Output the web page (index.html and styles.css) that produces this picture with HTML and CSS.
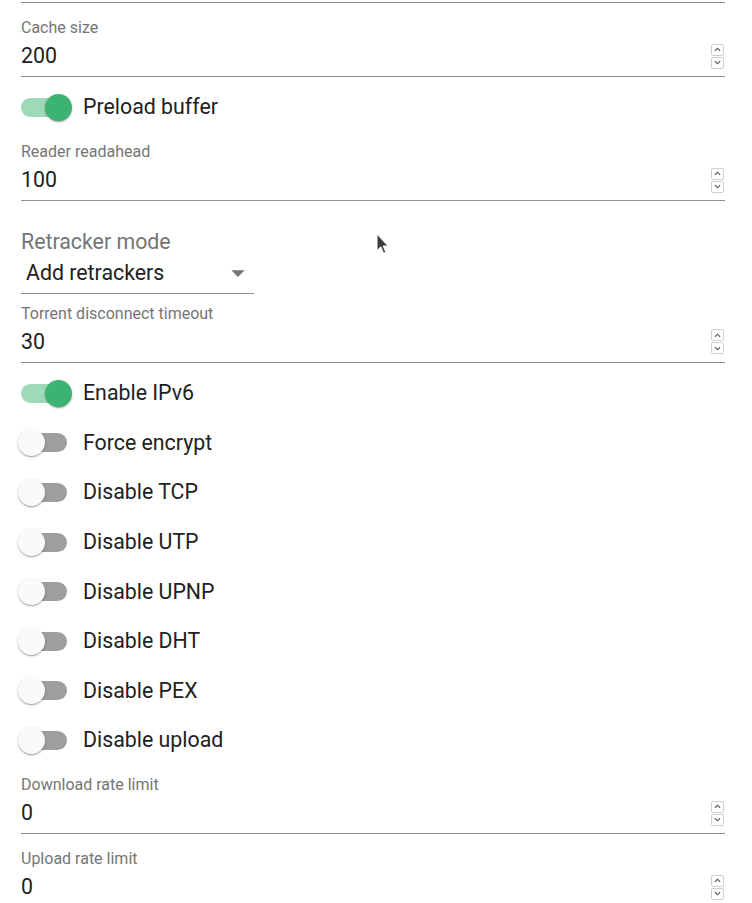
FILE: index.html
```html
<!DOCTYPE html>
<html lang="en">
<head>
<meta charset="utf-8">
<title>Settings</title>
<link rel="stylesheet" href="styles.css">
</head>
<body>
<div class="page">
  <div class="topline"></div>

  <div class="field gap-first">
    <div class="label">Cache size</div>
    <div class="input-row">
      <span class="value">200</span>
      <span class="spinner"><span class="spin-btn"><svg viewBox="0 0 8 5" class="chev"><path d="M1 4 L4 1 L7 4"/></svg></span><span class="spin-btn"><svg viewBox="0 0 8 5" class="chev"><path d="M1 1 L4 4 L7 1"/></svg></span></span>
    </div>
  </div>

  <div class="switch-row gap-sw-first">
    <span class="switch on"><span class="track"></span><span class="thumb"></span></span>
    <span class="sw-label">Preload buffer</span>
  </div>

  <div class="field gap-after-switch">
    <div class="label">Reader readahead</div>
    <div class="input-row">
      <span class="value">100</span>
      <span class="spinner"><span class="spin-btn"><svg viewBox="0 0 8 5" class="chev"><path d="M1 4 L4 1 L7 4"/></svg></span><span class="spin-btn"><svg viewBox="0 0 8 5" class="chev"><path d="M1 1 L4 4 L7 1"/></svg></span></span>
    </div>
  </div>

  <div class="select-field">
    <div class="select-label">Retracker mode</div>
    <div class="select-row">
      <span class="select-value">Add retrackers</span>
      <svg class="select-arrow" viewBox="0 0 24 24"><path d="M7 10l5 5 5-5z"/></svg>
    </div>
  </div>

  <div class="field gap-after-select">
    <div class="label">Torrent disconnect timeout</div>
    <div class="input-row">
      <span class="value">30</span>
      <span class="spinner"><span class="spin-btn"><svg viewBox="0 0 8 5" class="chev"><path d="M1 4 L4 1 L7 4"/></svg></span><span class="spin-btn"><svg viewBox="0 0 8 5" class="chev"><path d="M1 1 L4 4 L7 1"/></svg></span></span>
    </div>
  </div>

  <div class="switch-list">
    <div class="switch-row">
      <span class="switch on"><span class="track"></span><span class="thumb"></span></span>
      <span class="sw-label">Enable IPv6</span>
    </div>
    <div class="switch-row">
      <span class="switch"><span class="track"></span><span class="thumb"></span></span>
      <span class="sw-label">Force encrypt</span>
    </div>
    <div class="switch-row">
      <span class="switch"><span class="track"></span><span class="thumb"></span></span>
      <span class="sw-label">Disable TCP</span>
    </div>
    <div class="switch-row">
      <span class="switch"><span class="track"></span><span class="thumb"></span></span>
      <span class="sw-label">Disable UTP</span>
    </div>
    <div class="switch-row">
      <span class="switch"><span class="track"></span><span class="thumb"></span></span>
      <span class="sw-label">Disable UPNP</span>
    </div>
    <div class="switch-row">
      <span class="switch"><span class="track"></span><span class="thumb"></span></span>
      <span class="sw-label">Disable DHT</span>
    </div>
    <div class="switch-row">
      <span class="switch"><span class="track"></span><span class="thumb"></span></span>
      <span class="sw-label">Disable PEX</span>
    </div>
    <div class="switch-row">
      <span class="switch"><span class="track"></span><span class="thumb"></span></span>
      <span class="sw-label">Disable upload</span>
    </div>
  </div>

  <div class="field gap-after-list">
    <div class="label">Download rate limit</div>
    <div class="input-row">
      <span class="value">0</span>
      <span class="spinner"><span class="spin-btn"><svg viewBox="0 0 8 5" class="chev"><path d="M1 4 L4 1 L7 4"/></svg></span><span class="spin-btn"><svg viewBox="0 0 8 5" class="chev"><path d="M1 1 L4 4 L7 1"/></svg></span></span>
    </div>
  </div>

  <div class="field gap-field-field">
    <div class="label">Upload rate limit</div>
    <div class="input-row">
      <span class="value">0</span>
      <span class="spinner"><span class="spin-btn"><svg viewBox="0 0 8 5" class="chev"><path d="M1 4 L4 1 L7 4"/></svg></span><span class="spin-btn"><svg viewBox="0 0 8 5" class="chev"><path d="M1 1 L4 4 L7 1"/></svg></span></span>
    </div>
  </div>

  <svg class="cursor" viewBox="0 0 12 20" width="13" height="22"><path d="M1 1 L1 16 L4.5 12.5 L7 18.5 L9 17.6 L6.6 11.8 L11 11.8 Z"/></svg>
</div>
</body>
</html>
```

FILE: styles.css
```css
html, body {
  margin: 0;
  padding: 0;
  background: #ffffff;
  overflow: hidden;
}

.page {
  position: relative;
  padding: 0 27px 0 21px;
  font-family: Roboto, "Liberation Sans", Arial, sans-serif;
  color: #212121;
}

.topline {
  height: 2px;
  border-bottom: 1px solid #8f8f8f;
}

.field {
  display: flex;
  flex-direction: column;
}

.gap-first { margin-top: 15px; }
.gap-after-switch { margin-top: 10px; }
.gap-after-select { margin-top: 10px; }
.gap-after-list { margin-top: 10px; }
.gap-field-field { margin-top: 15px; }

.label {
  font-size: 16px;
  line-height: 19px;
  color: #757575;
}

.input-row {
  display: flex;
  align-items: center;
  margin-top: 6px;
  height: 26px;
  padding-bottom: 7px;
  border-bottom: 1px solid #8f8f8f;
}

.value {
  font-size: 21.33px;
  line-height: 26px;
  color: #212121;
}

.spinner {
  margin-left: auto;
  margin-right: 1px;
  display: flex;
  flex-direction: column;
  width: 13px;
  height: 25px;
}

.spin-btn {
  flex: 1;
  display: flex;
  align-items: center;
  justify-content: center;
  border: 1px solid #cfcfcf;
  border-radius: 2px;
  box-sizing: border-box;
}

.spin-btn + .spin-btn {
  margin-top: 1px;
}

.chev {
  width: 7px;
  height: 5px;
  fill: none;
  stroke: #505050;
  stroke-width: 1.3;
}

.switch-row {
  display: flex;
  align-items: center;
  height: 49.6px;
}

.gap-sw-first { margin-top: 5px; height: 50px; }

.switch-list {
  margin-top: 6px;
}

.switch {
  position: relative;
  width: 62px;
  height: 27px;
  flex: none;
  display: flex;
  align-items: center;
}

.track {
  width: 46px;
  height: 19px;
  border-radius: 9.5px;
  background: #9e9e9e;
}

.thumb {
  position: absolute;
  top: 0;
  left: -3px;
  width: 27px;
  height: 27px;
  border-radius: 50%;
  background: #fafafa;
  box-shadow: 0 1px 3px rgba(0,0,0,0.2), 0 1px 1px rgba(0,0,0,0.14), 0 2px 1px -1px rgba(0,0,0,0.12);
}

.switch.on .track {
  background: #9ed9b8;
}

.switch.on .thumb {
  left: 24px;
  background: #3cb371;
}

.sw-label {
  font-size: 21.33px;
  line-height: 26px;
  color: #212121;
}

.select-field {
  width: 233px;
  margin-top: 28px;
}

.select-label {
  font-size: 21.33px;
  line-height: 25px;
  color: #757575;
}

.select-row {
  display: flex;
  align-items: center;
  margin-top: 5.5px;
  height: 26px;
  padding-bottom: 7px;
  border-bottom: 1px solid #8f8f8f;
}

.select-value {
  padding-left: 5px;
  font-size: 21.33px;
  line-height: 26px;
  color: #212121;
}

.select-arrow {
  margin-left: auto;
  width: 32px;
  height: 32px;
  fill: #757575;
}

.cursor {
  position: absolute;
  left: 376px;
  top: 233px;
  fill: #3a3a3a;
  stroke: #ffffff;
  stroke-width: 0.8;
}
```
